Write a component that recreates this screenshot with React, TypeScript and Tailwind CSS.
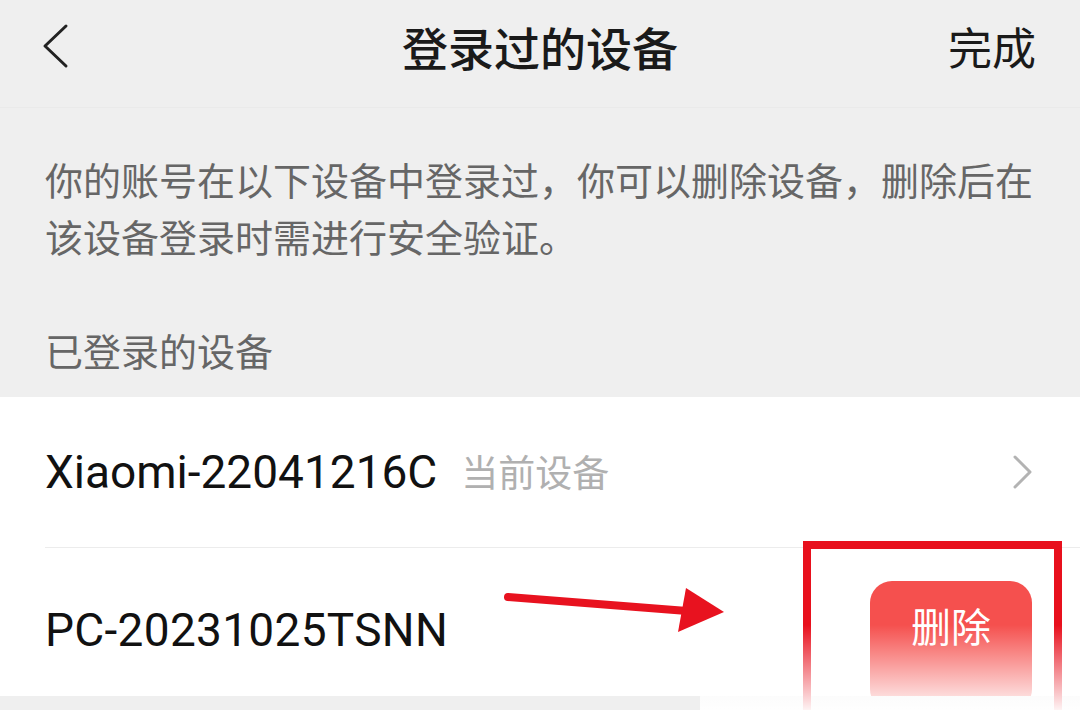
const cjk = { fontFamily: '"Noto Sans CJK SC", "Noto Sans", sans-serif' };
const latin = { fontFamily: 'Roboto, "Noto Sans CJK SC", sans-serif' };

const BackIcon = () => (
  <svg width="30" height="46" viewBox="0 0 30 46" fill="none">
    <path d="M26 3 L5 23 L26 43" stroke="#222" strokeWidth="3" strokeLinecap="round" strokeLinejoin="round" />
  </svg>
);

const ChevronRight = () => (
  <svg width="22" height="34" viewBox="0 0 22 34" fill="none">
    <path d="M3 2 L18 17 L3 32" stroke="#b3b3b3" strokeWidth="3" strokeLinecap="round" strokeLinejoin="round" />
  </svg>
);

export default function App() {
  return (
    <div className="relative h-[710px] w-[1080px] overflow-hidden bg-[#efefef]" style={cjk}>
      <header className="grid h-[108px] grid-cols-[1fr_auto_1fr] items-start border-b border-[#eaeaea] px-[40px] pt-[18px]">
        <div className="flex h-[56px] items-center">
          <BackIcon />
        </div>
        <h1 className="text-[46px] leading-[56px] font-medium text-[#1a1a1a]">登录过的设备</h1>
        <div className="flex h-[56px] items-center justify-end pr-[4px] text-[44px] text-[#1a1a1a]">完成</div>
      </header>

      <p className="pl-[45px] pr-[40px] pt-[42px] text-[38px] leading-[57px] text-[#666]">
        你的账号在以下设备中登录过，你可以删除设备，删除后在该设备登录时需进行安全验证。
      </p>

      <div className="pl-[45px] pt-[57px] pb-[18px] text-[38px] leading-[58px] text-[#666]">已登录的设备</div>

      <div className="bg-white">
        <div className="flex h-[150px] items-center justify-between pl-[45px] pr-[46px]">
          <div className="flex items-center gap-[24px]">
            <span className="text-[46px] text-[#111]" style={latin}>Xiaomi-22041216C</span>
            <span className="text-[37px] text-[#b0b0b0]">当前设备</span>
          </div>
          <ChevronRight />
        </div>
        <div className="ml-[45px] h-px bg-[#ececec]" />
        <div className="flex h-[148px] items-start justify-between overflow-hidden pl-[45px] pr-[48px]">
          <span className="mt-[48px] text-[46px] tracking-[0.3px] text-[#111]" style={latin}>PC-20231025TSNN</span>
          <div className="mt-[33px] flex h-[130px] w-[162px] items-start justify-center rounded-[22px] bg-[#f5504e] pt-[14px] text-[40px] text-white">
            删除
          </div>
        </div>
      </div>

      <svg className="absolute left-[500px] top-[580px]" width="240" height="60" viewBox="500 580 240 60">
        <path d="M508 597 L700 612" stroke="#e8121f" strokeWidth="8" strokeLinecap="round" />
        <path d="M686 588 L724 612 L678 632 Z" fill="#e8121f" />
      </svg>

      <div className="absolute left-[803px] top-[541px] h-[190px] w-[259px] border-[8px] border-[#e8101d]" />

      <div className="absolute left-[700px] top-[625px] h-[85px] w-[380px] bg-gradient-to-b from-white/0 to-white/95" />
    </div>
  );
}
